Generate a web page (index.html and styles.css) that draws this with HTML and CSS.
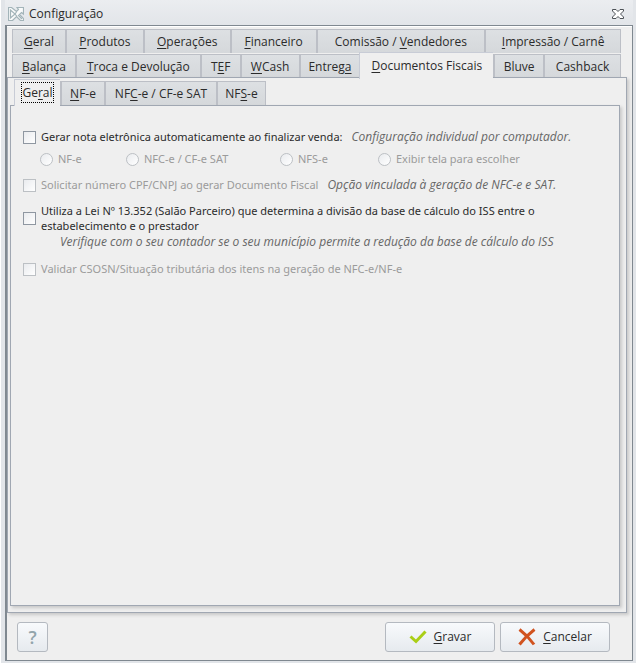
FILE: index.html
```html
<!DOCTYPE html>
<html lang="pt-BR">
<head>
<meta charset="UTF-8">
<meta name="viewport" content="width=device-width, initial-scale=1.0">
<title>Configuração</title>
<link rel="stylesheet" href="styles.css">
</head>
<body>

<header class="titlebar">
  <svg class="logo" width="16" height="14" viewBox="0 0 16 14">
    <path d="M0.500 0.500h3l5 4 2-2-1.500-2h6.500v6.500l-2-1.500-2 2 4 4v2h-3l-4-4-4 4h-4z" fill="#fafbfb" stroke="#a3b4b9" stroke-width="1.200"/>
    <path d="M2.500 3v8l4.500-4zM8.500 5l-1.500 2 2 2.500M10 8l4 4" fill="none" stroke="#a3b4b9" stroke-width="1.200"/>
  </svg>
  <span class="title">Configuração</span>
  <button class="close" aria-label="Fechar">
    <svg width="12" height="10" viewBox="0 0 12 10">
      <path d="M0.500 0.500h3.500l2 2 2-2h3.500v1.500l-3 3 3 3v1.500h-3.500l-2-2-2 2h-3.500v-1.500l3-3-3-3z" fill="#fff" stroke="#4c5156"/>
    </svg>
  </button>
</header>

<main class="window">
  <div class="tabs tabs-first" role="tablist">
    <button class="tab" role="tab"><u>G</u>eral</button>
    <button class="tab" role="tab"><u>P</u>rodutos</button>
    <button class="tab" role="tab"><u>O</u>perações</button>
    <button class="tab" role="tab"><u>F</u>inanceiro</button>
    <button class="tab" role="tab">Comissão / <u>V</u>endedores</button>
    <button class="tab" role="tab"><u>I</u>mpressão / Carnê</button>
  </div>
  <div class="tabs tabs-second" role="tablist">
    <button class="tab" role="tab"><u>B</u>alança</button>
    <button class="tab" role="tab"><u>T</u>roca e Devolução</button>
    <button class="tab" role="tab">T<u>E</u>F</button>
    <button class="tab" role="tab"><u>W</u>Cash</button>
    <button class="tab" role="tab">Entreg<u>a</u></button>
    <button class="tab active" role="tab" aria-selected="true"><u>D</u>ocumentos Fiscais</button>
    <button class="tab" role="tab">Bluve</button>
    <button class="tab" role="tab">Cashback</button>
  </div>

  <section class="panel outer">
    <div class="tabs tabs-sub" role="tablist">
      <button class="tab active" role="tab" aria-selected="true"><span class="focus">Ge<u>r</u>al</span></button>
      <button class="tab" role="tab"><u>N</u>F-e</button>
      <button class="tab" role="tab">NF<u>C</u>-e / CF-e SAT</button>
      <button class="tab" role="tab">NF<u>S</u>-e</button>
    </div>

    <form class="panel inner">
      <div class="row">
        <input type="checkbox" id="gerar">
        <label for="gerar">Gerar nota eletrônica automaticamente ao finalizar venda:</label>
        <em>Configuração individual por computador.</em>
      </div>
      <div class="radios">
        <label><input type="radio" name="tipo" disabled>NF-e</label>
        <label><input type="radio" name="tipo" disabled>NFC-e / CF-e SAT</label>
        <label><input type="radio" name="tipo" disabled>NFS-e</label>
        <label><input type="radio" name="tipo" disabled>Exibir tela para escolher</label>
      </div>
      <div class="row disabled">
        <input type="checkbox" id="cpf" disabled>
        <label for="cpf">Solicitar número CPF/CNPJ ao gerar Documento Fiscal</label>
        <em>Opção vinculada à geração de NFC-e e SAT.</em>
      </div>
      <div class="row law">
        <input type="checkbox" id="lei">
        <label for="lei">Utiliza a Lei Nº 13.352 (Salão Parceiro) que determina a divisão da base de cálculo do ISS entre o<br>estabelecimento e o prestador</label>
      </div>
      <p class="note">Verifique com o seu contador se o seu município permite a redução da base de cálculo do ISS</p>
      <div class="row disabled">
        <input type="checkbox" id="csosn" disabled>
        <label for="csosn">Validar CSOSN/Situação tributária dos itens na geração de NFC-e/NF-e</label>
      </div>
    </form>
  </section>

  <footer class="footer">
    <button class="btn help" aria-label="Ajuda">?</button>
    <button class="btn action">
      <svg width="18" height="14" viewBox="0 0 18 14"><path d="M1.500 6.500L7 11.500 16.500 1.500" fill="none" stroke="#aace16" stroke-width="3"/></svg>
      <span><u>G</u>ravar</span>
    </button>
    <button class="btn action">
      <svg width="18" height="18" viewBox="0 0 18 18"><path d="M1.500 1.500Q10 8 16 16.500M16.500 1.500Q8 8 1.500 16.500" fill="none" stroke="#d1531f" stroke-width="3"/></svg>
      <span><u>C</u>ancelar</span>
    </button>
  </footer>
</main>

</body>
</html>
```

FILE: styles.css
```css
* {
  box-sizing: border-box;
}

body {
  display: flex;
  flex-direction: column;
  min-height: 100vh;
  margin: 0;
  padding: 0 3px 2px 4px;
  border-left: 1px solid #fff;
  background: #e2e5e9;
  color: #2b2b2b;
  font-family: "Open Sans", "Noto Sans", sans-serif;
  font-size: 12px;
  line-height: 16px;
}

button, input {
  font: inherit;
  color: inherit;
  margin: 0;
}

u {
  text-underline-offset: 2px;
}

.titlebar {
  display: flex;
  align-items: center;
  height: 25px;
  padding: 2px 9px 0 3px;
  background: linear-gradient(#ebedf0, #e2e5e9);
}

.title {
  flex: 1;
  margin-left: 5px;
}

.close {
  display: flex;
  padding: 0;
  border: none;
  background: none;
}

.window {
  flex: 1;
  display: flex;
  flex-direction: column;
  padding: 3px 5px 8px 0;
  border: 1px solid #7f8890;
  border-left-width: 2px;
  background: #efefef;
  box-shadow: inset 0 1px #fff;
}

.tabs {
  display: grid;
}

.tabs-first {
  grid-template-columns: 53fr 78fr 87fr 86fr 169fr 137fr;
  margin: 0 6px 1px 5px;
}

.tabs-second {
  grid-template-columns: 63fr 125fr 40fr 59fr 61fr 134fr 50fr 78fr;
  margin: 0 6px -1px 5px;
}

.tabs-sub {
  grid-template-columns: 46px 44px 112px 50px;
  margin-left: 4px;
}

.tab {
  height: 24px;
  padding: 0;
  border: 1px solid #bcbfc6;
  border-left-width: 2px;
  border-right: none;
  border-bottom: none;
  background: linear-gradient(#dde0e3, #d5d8db);
  white-space: nowrap;
}

.tab:last-child {
  border-right: 1px solid #bcbfc6;
}

.tab:first-child {
  border-left-width: 1px;
}

.tab.active {
  position: relative;
  height: 27px;
  margin: -2px 0 -1px;
  border-color: #c8ccd6;
  border-left-width: 1px;
  background: #efefef;
}

.focus {
  padding: 1px 0;
  border: 1px dotted #000;
}

.panel {
  border: 1px solid #a0a7b2;
  background: #efefef;
  box-shadow: 2px 2px 3px #c8c8c8;
}

.outer {
  flex: 1;
  display: flex;
  flex-direction: column;
  padding: 3px 6px 6px 2px;
}

.inner {
  flex: 1;
  padding: 23px 12px;
}

.row {
  display: flex;
  align-items: center;
  gap: 5px;
  white-space: nowrap;
}

.row label, .radios {
  font-family: "Noto Sans", "Open Sans", sans-serif;
  font-size: 11px;
}

.row em, .note {
  color: #666;
  font-style: italic;
}

.row em {
  margin-left: 4px;
}

.disabled label, .radios {
  color: #9b9b9b;
}

input {
  flex: none;
  appearance: none;
  width: 13px;
  height: 13px;
  border: 1px solid #8f97a1;
  background: linear-gradient(135deg, #e9ebee, #fff);
}

input:disabled {
  border-color: #bcc0c4;
}

input[type="radio"] {
  border-radius: 50%;
}

.radios {
  display: grid;
  grid-template-columns: 86px 154px 98px auto;
  margin: 6px 0 10px 17px;
}

.radios label {
  display: flex;
  align-items: center;
  gap: 5px;
  white-space: nowrap;
}

.law {
  margin-top: 10px;
  line-height: 15px;
}

.note {
  margin: 1px 0 11px 37px;
  white-space: nowrap;
}

.footer {
  display: flex;
  gap: 5px;
  padding: 9px 17px 0 10px;
}

.btn {
  display: flex;
  align-items: center;
  justify-content: center;
  height: 30px;
  padding: 0;
  border: 1px solid #b4b9c0;
  border-radius: 3px;
  background: linear-gradient(#f8fafc, #e6eaee);
}

.help {
  width: 31px;
  margin-right: auto;
  color: #93a5ac;
  font-size: 18px;
  font-weight: 600;
}

.action {
  width: 110px;
  gap: 7px;
}
```
